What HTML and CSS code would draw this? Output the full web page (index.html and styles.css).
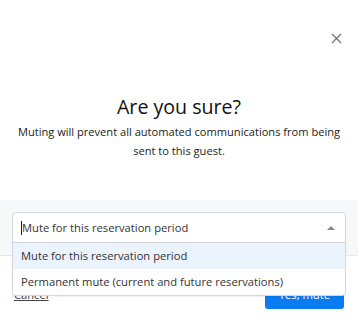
FILE: index.html
```html
<!DOCTYPE html>
<html lang="en">

<head>
    <meta charset="UTF-8">
    <meta name="viewport" content="width=device-width, initial-scale=1.0">
    <title>Mute guest</title>
    <link rel="stylesheet" href="styles.css">
</head>

<body>
    <div class="modal">
        <div class="modal-header">
            <button class="close" aria-label="Close">
                <svg width="11" height="11" viewBox="0 0 11 11">
                    <path d="M1 1 L10 10 M10 1 L1 10" stroke="#6e7c93" stroke-width="1.4" fill="none" />
                </svg>
            </button>
        </div>

        <div class="modal-body">
            <h2 class="title">Are you sure?</h2>
            <p class="desc">Muting will prevent all automated communications from being sent to this guest.</p>
        </div>

        <div class="modal-options">
            <div class="select">
                <div class="select-control">
                    <span class="caret"></span>
                    <span class="select-value">Mute for this reservation period</span>
                    <span class="arrow"></span>
                </div>
                <ul class="select-menu">
                    <li class="option active">Mute for this reservation period</li>
                    <li class="option">Permanent mute (current and future reservations)</li>
                </ul>
            </div>
        </div>

        <div class="modal-footer">
            <a class="cancel" href="#">Cancel</a>
            <button class="btn-primary">Yes, mute</button>
        </div>
    </div>
</body>

</html>
```

FILE: styles.css
```css
body {
    margin: 0;
    font-family: 'Open Sans', 'Noto Sans', sans-serif;
    background: #fff;
    color: #1f1f1f;
}

.modal {
    width: 358px;
    height: 334px;
    overflow: hidden;
}

.modal-header {
    height: 76px;
    display: flex;
    justify-content: flex-end;
    align-items: flex-start;
}

.close {
    border: none;
    background: none;
    padding: 0;
    margin: 33px 16px 0 0;
    width: 11px;
    height: 11px;
    display: flex;
    cursor: pointer;
}

.modal-body {
    text-align: center;
    padding: 0 8px;
    height: 124px;
}

.title {
    margin: 0;
    font-size: 19.6px;
    font-weight: 400;
    line-height: 26px;
    padding-top: 18px;
    color: #111;
}

.desc {
    margin: 2px 0 0;
    font-size: 11.1px;
    line-height: 19px;
    color: #222;
}

.modal-options {
    background: #f7f8fa;
    padding: 12px 12px 12px;
    border-bottom: 1px solid #e6e8eb;
}

.select {
    position: relative;
}

.select-control {
    height: 29px;
    background: #fff;
    border: 1px solid #d3d7dc;
    border-radius: 4px 4px 0 0;
    display: flex;
    align-items: center;
    padding: 0 10px 0 8px;
    font-size: 11.2px;
    color: #333;
}

.caret {
    width: 1px;
    height: 14px;
    background: #222;
}

.select-value {
    flex: 1;
}

.arrow {
    width: 0;
    height: 0;
    border-left: 4px solid transparent;
    border-right: 4px solid transparent;
    border-bottom: 4px solid #888;
}

.select-menu {
    position: absolute;
    left: 0;
    right: 0;
    top: 30px;
    margin: 0;
    padding: 0;
    list-style: none;
    background: #fff;
    border: 1px solid #d3d7dc;
    border-radius: 0 0 4px 4px;
    box-shadow: 0 1px 2px rgba(0, 0, 0, 0.06);
    z-index: 2;
}

.option {
    height: 26px;
    line-height: 26px;
    padding: 0 8px;
    font-size: 11.2px;
    color: #333;
}

.option.active {
    background: #ebf3fd;
}

.modal-footer {
    display: flex;
    justify-content: space-between;
    align-items: center;
    padding: 23px 14px 0 14px;
}

.cancel {
    font-size: 11.2px;
    color: #444;
    text-decoration: underline;
}

.btn-primary {
    background: #0a7cf2;
    color: #fff;
    border: none;
    border-radius: 3px;
    height: 30px;
    padding: 0 14px;
    font-family: inherit;
    font-size: 11.2px;
    cursor: pointer;
}
```
